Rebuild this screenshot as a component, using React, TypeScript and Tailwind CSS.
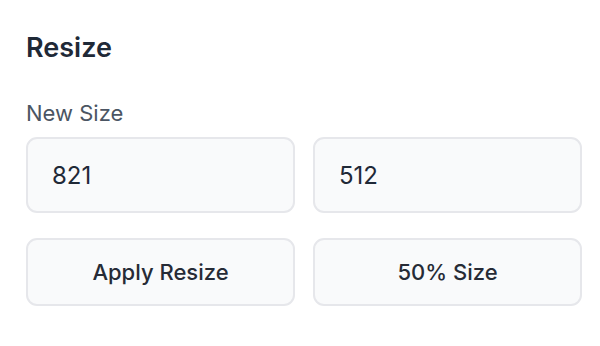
import { useState } from "react";

// one box style for both the size fields and the action buttons
const BOX =
  "w-full rounded-[11px] border-2 border-[#e6e7eb] bg-[#f9fafb] text-[#1f2937] outline-none";

function SizeField({ value, onChange }: { value: string; onChange: (v: string) => void }) {
  return (
    <input
      value={value}
      onChange={(e) => onChange(e.target.value)}
      className={`${BOX} h-[76px] px-[24px] text-[24px] leading-none`}
    />
  );
}

function ActionButton({ label }: { label: string }) {
  return (
    <button className={`${BOX} h-[68px] text-[22px] font-medium leading-none text-[#262b36]`}>
      {label}
    </button>
  );
}

export default function App() {
  const [w, setW] = useState("821");
  const [h, setH] = useState("512");

  return (
    <div
      className="h-[346px] w-[600px] bg-white pl-[26px] pt-[31px]"
      style={{ fontFamily: "Inter, 'Noto Sans', sans-serif" }}
    >
      <div className="w-[556px]">
        <h2 className="text-[27px] font-semibold leading-[33px] text-[#1f2937]">Resize</h2>

        <div className="mt-[35px] text-[22px] leading-[28px] text-[#4b5563]">New Size</div>

        <div className="mt-[10px] grid grid-cols-2 gap-[18px]">
          <SizeField value={w} onChange={setW} />
          <SizeField value={h} onChange={setH} />
        </div>

        <div className="mt-[25px] grid grid-cols-2 gap-[18px]">
          <ActionButton label="Apply Resize" />
          <ActionButton label="50% Size" />
        </div>
      </div>
    </div>
  );
}
